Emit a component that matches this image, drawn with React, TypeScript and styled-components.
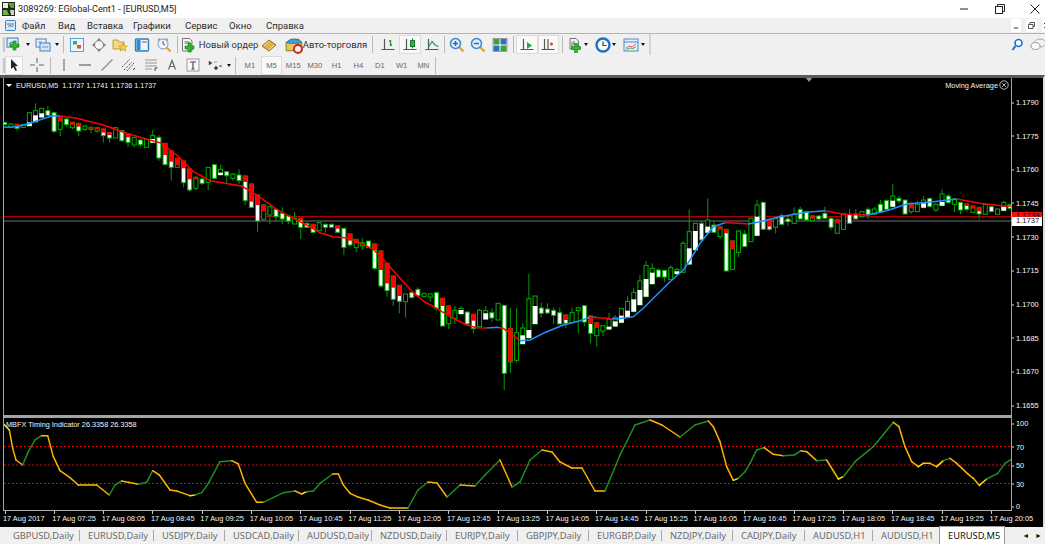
import React from "react";
import styled, { createGlobalStyle } from "styled-components";

const GlobalStyle = createGlobalStyle`
  html, body {
    margin: 0;
    padding: 0;
    background: #f0f0f0;
    overflow: hidden;
  }
`;

const UI_FONT = `Roboto, "Liberation Sans", sans-serif`;
const TAB_FONT = `"Noto Sans", "Liberation Sans", sans-serif`;
const CHART_FONT = `"Liberation Sans", Arial, sans-serif`;

const Window = styled.div`
  width: 1045px;
  height: 544px;
  display: flex;
  flex-direction: column;
  overflow: hidden;
  font-family: ${UI_FONT};
`;

const TitleBar = styled.div`
  height: 18px;
  background: #fff;
  display: flex;
  align-items: center;
  padding-left: 2px;
  color: #222;
  font-size: 9.15px;
`;

const TitleText = styled.span`
  margin-left: 3px;
  flex: 1;
`;

const WinButtons = styled.div`
  display: flex;
  margin-right: -8px;
`;

const WinButton = styled.div`
  width: 35.5px;
  height: 18px;
  display: flex;
  align-items: center;
  justify-content: center;
`;

const MenuBar = styled.div`
  height: 15px;
  background: #f0f0f0;
  border-bottom: 1px solid #b4b4b4;
  display: flex;
  align-items: center;
  font-size: 9.5px;
  color: #2a2a2a;
  padding-left: 5px;
`;

const MenuItem = styled.span<{ $w: number }>`
  width: ${(p) => p.$w}px;
  flex: none;
`;

const MdiButton = styled.div<{ $w: number }>`
  width: ${(p) => p.$w}px;
  height: 13px;
  flex: none;
  margin-left: 5px;
  background: #fff;
  display: flex;
  align-items: center;
  justify-content: center;
`;

const ToolRow = styled.div<{ $h: number }>`
  height: ${(p) => p.$h}px;
  background: #f0f0f0;
  display: flex;
  align-items: center;
  padding-left: 2px;
  font-size: 9.5px;
  color: #333;
`;

const Grip = styled.div`
  width: 3px;
  height: 15px;
  background: #c8c8c8;
  border-left: 1px solid #e8e8e8;
  box-sizing: border-box;
`;

const ToolGroup = styled.div<{ $end: number }>`
  display: flex;
  align-items: center;
  height: 100%;
  width: ${(p) => p.$end}px;
  box-sizing: border-box;
  border-right: 2px solid #d4d4d4;
`;

const Tool = styled.div<{ $w: number; $ml?: number; $active?: boolean; $gap?: number }>`
  width: ${(p) => p.$w}px;
  height: 19px;
  margin-left: ${(p) => p.$ml ?? 0}px;
  flex: none;
  display: flex;
  align-items: center;
  justify-content: center;
  box-sizing: border-box;
  background: ${(p) => (p.$active ? "#f9f9f9" : "transparent")};
  box-shadow: ${(p) => (p.$active ? "inset 0 0 0 1px #dcdcdc" : "none")};
`;

const TextTool = styled(Tool)`
  justify-content: flex-start;
  gap: ${(p) => p.$gap ?? 0}px;
  white-space: nowrap;
`;

const Period = styled(Tool)`
  font-family: ${CHART_FONT};
  font-size: 7.6px;
  color: #666;
`;

const Sep = styled.div<{ $w: number }>`
  width: ${(p) => p.$w}px;
  height: 17px;
  flex: none;
  display: flex;
  justify-content: center;

  &::before {
    content: "";
    width: 1px;
    background: #b9b9b9;
  }
`;

const Arrow = styled.div<{ $w: number }>`
  width: ${(p) => p.$w}px;
  flex: none;
  display: flex;
  justify-content: center;

  &::before {
    content: "";
    border-left: 2.5px solid transparent;
    border-right: 2.5px solid transparent;
    border-top: 3px solid #111;
  }
`;

const RightIcons = styled.div`
  margin-left: auto;
  display: flex;
  align-items: center;
  gap: 5px;
  margin-right: -1px;
`;

const ChartFrame = styled.div`
  height: 452px;
  flex: none;
  box-sizing: border-box;
  background: #000;
  border-top: 3px solid #5a5a5a;
  border-right: 2px solid #e0e0e0;
  display: flex;
  flex-direction: column;
`;

const Pane = styled.div<{ $h: number }>`
  height: ${(p) => p.$h}px;
  flex: none;
  display: flex;
  padding-left: 3px;
`;

const Plot = styled.div`
  position: relative;
  width: 1009px;
  box-sizing: border-box;
  border-left: 1px solid #a0a0a0;
  border-right: 1px solid #a0a0a0;
  flex: none;

  svg {
    display: block;
  }
`;

const Legend = styled.div`
  position: absolute;
  top: 3px;
  left: 2px;
  display: flex;
  align-items: center;
  gap: 3px;
  color: #f2f2f2;
  font: 7.2px ${CHART_FONT};
  white-space: pre;
`;

const LegendMark = styled.i`
  border-left: 3px solid transparent;
  border-right: 3px solid transparent;
  border-top: 3.5px solid #fff;
  margin-right: 1px;
`;

const IndicatorName = styled.div`
  position: absolute;
  top: 2px;
  right: 2px;
  display: flex;
  align-items: center;
  gap: 1px;
  color: #f2f2f2;
  font: 7.4px ${CHART_FONT};
`;

const ShiftMark = styled.i`
  position: absolute;
  top: 0;
  left: 802px;
  border-left: 3.5px solid transparent;
  border-right: 3.5px solid transparent;
  border-top: 4px solid #8a9aa8;
`;

const SubTitle = styled.div`
  position: absolute;
  top: 2px;
  left: 2px;
  color: #f4f4f4;
  font: 7.3px ${CHART_FONT};
`;

const Axis = styled.div`
  position: relative;
  flex: 1;
`;

const AxisLabel = styled.span`
  position: absolute;
  left: 4px;
  transform: translateY(-50%);
  color: #f6f6f6;
  font: 7.4px ${CHART_FONT};

  &::before {
    content: "";
    position: absolute;
    left: -4px;
    top: 50%;
    width: 2px;
    height: 1px;
    background: #ddd;
  }
`;

const PriceTag = styled.span<{ $bg: string; $h: number }>`
  position: absolute;
  left: 0;
  width: 30px;
  height: ${(p) => p.$h}px;
  box-sizing: border-box;
  padding-left: 4px;
  background: ${(p) => p.$bg};
  color: #111;
  font: 7.6px/8.5px ${CHART_FONT};
`;

const Divider = styled.div`
  height: 3px;
  flex: none;
  margin-left: 3px;
  width: 1009px;
  background: #a4a4a4;
`;

const BottomRule = styled.div`
  height: 1px;
  flex: none;
  margin-left: 3px;
  width: 1009px;
  background: #b0b0b0;
`;

const TimeAxis = styled.div`
  height: 16px;
  flex: none;
  display: flex;
  padding-left: 3px;
`;

const TimeLabel = styled.span`
  position: relative;
  width: 49.33px;
  flex: none;
  padding-top: 3px;
  color: #f6f6f6;
  font: 7.4px ${CHART_FONT};
  white-space: nowrap;

  &::before {
    content: "";
    position: absolute;
    top: 0;
    left: 1.5px;
    width: 1px;
    height: 3px;
    background: #ccc;
  }
`;

const TabBar = styled.div`
  flex: 1;
  display: flex;
  align-items: center;
  background: #f0f0f0;
  padding-left: 5px;
  font-family: ${TAB_FONT};
  font-size: 9.3px;
  color: #6a6a6a;
`;

const Tab = styled.div<{ $w: number; $active?: boolean }>`
  width: ${(p) => p.$w}px;
  height: ${(p) => (p.$active ? 17 : 11)}px;
  flex: none;
  box-sizing: border-box;
  display: flex;
  align-items: center;
  padding-left: 8px;
  white-space: nowrap;
  color: ${(p) => (p.$active ? "#111" : "inherit")};
  background: ${(p) => (p.$active ? "#fff" : "transparent")};
  border-right: ${(p) => (p.$active ? "none" : "1px solid #a8a8a8")};
  box-shadow: ${(p) => (p.$active ? "0 0 0 1px #9a9a9a" : "none")};
`;

const TabScroll = styled.div`
  margin-left: auto;
  display: flex;
  gap: 6px;
  padding-right: 3px;
  font-size: 7px;
  color: #111;
`;

/* candles: [high, bodyTop, bodyBottom, low, kind, split], in 1/3 px from a base y */
type Kind = "w" | "k" | "r" | "R" | "K";
type Row = [number, number, number, number, Kind, number?];

const rowsA: Row[] = [
  [97, 97, 104, 104, "w"], [100, 102, 112, 114, "k"], [103, 103, 115, 122, "r", 108], [102, 103, 112, 114, "k"],
  [68, 68, 108, 108, "K", 97], [40, 62, 96, 96, "K", 76], [55, 55, 82, 82, "K", 70], [47, 62, 76, 76, "w"],
  [68, 68, 124, 130, "w"], [82, 82, 118, 138, "R", 95], [84, 87, 104, 110, "w"], [95, 97, 113, 118, "R", 104],
  [100, 100, 123, 138, "r", 110], [106, 108, 118, 123, "k"], [112, 112, 118, 130, "R", 116], [110, 113, 123, 130, "R", 117],
  [117, 117, 137, 158, "r", 128], [128, 128, 144, 158, "r", 135], [112, 113, 144, 144, "k"], [120, 122, 152, 156, "w"],
  [130, 132, 157, 172, "r", 142], [142, 142, 165, 172, "k"], [148, 150, 164, 172, "w"], [148, 148, 172, 172, "k"],
  [120, 136, 158, 158, "K", 147], [136, 142, 204, 212, "w"], [160, 160, 224, 224, "r", 195], [183, 183, 232, 272, "r", 215],
  [205, 205, 232, 232, "R", 226], [213, 213, 278, 292, "r", 235], [237, 237, 300, 305, "r", 268], [258, 262, 295, 300, "R", 268],
  [262, 267, 280, 285, "w"], [232, 232, 277, 300, "k"], [224, 224, 265, 268, "w"], [224, 238, 255, 255, "K", 248],
  [245, 245, 257, 282, "w"], [250, 252, 265, 272, "k"], [238, 255, 272, 282, "w"], [258, 258, 332, 345, "r", 276],
  [282, 282, 352, 352, "r", 335], [315, 315, 393, 425, "r", 345], [345, 345, 388, 393, "R", 363], [350, 350, 375, 402, "k"],
  [355, 358, 380, 395, "w"], [352, 370, 387, 402, "w"], [375, 378, 393, 402, "w"], [365, 385, 402, 402, "k"],
  [383, 385, 412, 447, "r", 392], [398, 400, 412, 415, "w"], [403, 403, 427, 427, "r", 415], [395, 398, 422, 422, "k"],
  [400, 403, 412, 428, "w"], [400, 403, 412, 412, "w"], [406, 408, 427, 427, "r", 416], [415, 415, 472, 495, "w"],
];

const rowsB: Row[] = [
  [102, 102, 135, 140, "r", 122], [118, 118, 143, 157, "R", 130], [115, 128, 138, 150, "k"], [123, 123, 143, 143, "w"],
  [132, 132, 205, 212, "r", 150], [153, 153, 258, 265, "r", 210], [190, 190, 272, 290, "r", 250], [228, 228, 298, 318, "r", 263],
  [256, 256, 304, 340, "r", 288], [282, 282, 305, 353, "k"], [277, 277, 293, 293, "w"], [262, 268, 287, 287, "w"],
  [278, 280, 290, 292, "k"], [280, 282, 291, 305, "k"], [278, 278, 325, 332, "w"], [295, 295, 378, 378, "r", 318],
  [318, 318, 371, 387, "R", 345], [318, 331, 355, 372, "k"], [318, 325, 342, 342, "K", 330], [333, 336, 372, 372, "w"],
  [343, 343, 386, 400, "r", 362], [326, 331, 380, 380, "k"], [318, 332, 358, 358, "K", 340], [325, 338, 354, 366, "w"],
  [310, 310, 360, 360, "k"], [316, 316, 520, 570, "w"], [323, 385, 486, 520, "r", 486], [323, 398, 481, 488, "k"],
  [370, 384, 432, 432, "K", 406], [222, 296, 414, 414, "K", 390], [288, 288, 372, 372, "K", 318], [308, 324, 340, 353, "w"],
  [310, 327, 339, 342, "w"], [323, 331, 346, 373, "w"], [323, 338, 372, 372, "w"], [345, 345, 370, 385, "r", 360],
  [322, 338, 368, 368, "k"], [323, 323, 332, 400, "k"], [317, 317, 366, 378, "w"], [348, 348, 400, 430, "r", 372],
  [368, 368, 407, 440, "R", 384], [377, 377, 393, 408, "k"], [338, 358, 388, 388, "K", 380], [345, 352, 379, 379, "K", 364],
  [325, 325, 368, 368, "K", 347], [288, 304, 352, 352, "K", 332], [265, 277, 335, 335, "K", 298], [225, 243, 315, 315, "K", 270],
  [183, 196, 290, 290, "K", 237], [190, 205, 252, 252, "K", 218], [205, 210, 231, 231, "w"], [211, 211, 231, 245, "w"],
  [195, 203, 238, 238, "k"], [205, 208, 222, 222, "K", 214], [123, 130, 217, 217, "k"],
];

const rowsC: Row[] = [
  [118, 185, 283, 283, "K", 235], [160, 160, 240, 240, "K", 183], [152, 160, 210, 210, "w"], [85, 150, 188, 188, "K", 170],
  [150, 165, 187, 187, "w"], [168, 170, 200, 207, "R", 178], [178, 178, 303, 303, "r", 190], [213, 213, 298, 298, "R", 238],
  [180, 183, 247, 262, "k"], [180, 192, 230, 230, "w"], [145, 145, 215, 215, "k"], [90, 105, 197, 197, "K", 140],
  [97, 97, 178, 178, "w"], [148, 148, 178, 183, "r", 170], [140, 145, 172, 190, "k"], [130, 137, 163, 163, "w"],
  [135, 147, 155, 168, "w"], [112, 132, 160, 160, "k"], [110, 118, 147, 147, "w"], [122, 125, 150, 150, "w"],
  [135, 138, 152, 152, "R", 146], [135, 138, 147, 150, "w"], [110, 130, 145, 145, "w"], [140, 145, 172, 180, "w"],
  [148, 148, 190, 190, "R", 160], [130, 132, 178, 178, "k"], [118, 133, 160, 160, "w"], [118, 132, 147, 147, "w"],
  [122, 125, 140, 140, "k"], [112, 118, 135, 147, "w"], [110, 117, 133, 133, "k"], [90, 103, 127, 127, "w"],
  [88, 92, 118, 118, "w"], [43, 78, 110, 110, "K", 92], [78, 85, 93, 100, "w"], [90, 90, 132, 132, "w"],
  [97, 100, 125, 132, "R", 115], [92, 103, 125, 125, "k"], [78, 90, 113, 113, "K", 100], [85, 85, 110, 110, "w"],
  [98, 103, 120, 125, "k"], [58, 72, 107, 107, "K", 96], [72, 78, 98, 98, "w"], [85, 87, 103, 127, "k"],
  [97, 97, 120, 132, "w"], [102, 102, 118, 125, "r", 108], [108, 108, 127, 127, "R", 116], [112, 112, 132, 147, "r", 124],
  [103, 103, 133, 133, "k"], [110, 110, 125, 125, "w"], [115, 117, 133, 133, "k"], [92, 97, 122, 122, "K", 110],
  [104, 104, 115, 115, "w"],
];

const BAR_STEP = 6.167;
const barX = (i: number) => 4.7 + i * BAR_STEP;
const toY = (z: number, base: number) => base + z / 3;

const scaleRows = (rows: Row[], base: number) =>
  rows.map((r) => ({
    hi: toY(r[0], base),
    top: toY(r[1], base),
    bot: toY(r[2], base),
    lo: toY(r[3], base),
    kind: r[4],
    split: r[5] === undefined ? 0 : toY(r[5], base),
  }));

const candles = [...scaleRows(rowsA, 90), ...scaleRows(rowsB, 200), ...scaleRows(rowsC, 170)];

const WICK = "#009000";
const EDGE = "#00b000";

const Candle = ({ i }: { i: number }) => {
  const c = candles[i];
  const x = barX(i);
  const h = Math.max(c.bot - c.top, 1);
  const rect = { x: x - 2, width: 4 };
  return (
    <g>
      <line x1={x} x2={x} y1={c.hi} y2={c.lo} stroke={WICK} strokeWidth={1.1} />
      {c.kind === "w" && <rect {...rect} y={c.top} height={h} fill="#fff" stroke={EDGE} strokeWidth={1} />}
      {c.kind === "k" && <rect {...rect} y={c.top} height={h} fill="#000" stroke={EDGE} strokeWidth={1} />}
      {c.kind === "K" && (
        <>
          <rect {...rect} y={c.top} height={h} fill="#000" stroke={EDGE} strokeWidth={1} />
          <rect x={x - 2.4} width={4.8} y={c.split} height={c.bot - c.split} fill="#fff" />
        </>
      )}
      {c.kind === "r" && (
        <>
          <rect {...rect} y={c.top} height={h} fill="#fff" stroke={EDGE} strokeWidth={1} />
          <rect x={x - 2.2} width={4.4} y={c.top - 0.4} height={c.split - c.top + 0.4} fill="#f00" />
        </>
      )}
      {c.kind === "R" && (
        <>
          <rect {...rect} y={c.top} height={h} fill="#000" stroke={EDGE} strokeWidth={1} />
          <rect x={x - 2.2} width={4.4} y={c.top - 0.4} height={c.split - c.top + 0.4} fill="#f00" />
        </>
      )}
    </g>
  );
};

/* moving average as coloured runs */
const z6 = (a: number[][]) => a.map(([x, y]) => [x / 3, 90 + y / 3]);
const z7 = (a: number[][]) => a.map(([x, y]) => [350 + x / 3, 200 + y / 3]);
const z8 = (a: number[][]) => a.map(([x, y]) => [680 + x / 3, 170 + y / 3]);

const BLUE = "#1e90ff";
const RED = "#f00";

const maRuns: { color: string; pts: number[][] }[] = [
  { color: BLUE, pts: z6([[11, 112], [50, 110], [90, 100], [125, 88], [155, 78], [180, 78]]) },
  {
    color: RED,
    pts: [
      ...z6([[180, 78], [230, 85], [310, 105], [380, 130], [440, 148], [480, 158], [530, 195], [580, 245], [630, 272], [725, 288], [770, 315], [830, 358], [880, 385], [920, 405], [960, 428], [1000, 440], [1050, 445]]),
      ...z7([[70, 148], [110, 190], [150, 235], [190, 278], [220, 303], [260, 325], [300, 350], [350, 375], [380, 383], [410, 384]]),
    ],
  },
  { color: BLUE, pts: z7([[410, 384], [440, 382], [450, 383]]) },
  { color: RED, pts: z7([[450, 383], [460, 385], [480, 400], [510, 422]]) },
  { color: BLUE, pts: z7([[510, 422], [540, 420], [580, 400], [640, 375], [690, 362], [720, 352], [740, 352]]) },
  { color: RED, pts: z7([[720, 352], [770, 355], [785, 356]]) },
  { color: BLUE, pts: [...z7([[785, 356], [800, 357], [850, 350], [880, 325], [920, 285], [960, 245], [1000, 210]]), ...z8([[30, 270], [60, 220], [100, 170], [135, 158]])] },
  { color: RED, pts: z8([[135, 158], [175, 160], [205, 162]]) },
  { color: BLUE, pts: z8([[205, 162], [240, 155], [300, 140], [380, 127], [435, 122]]) },
  { color: RED, pts: z8([[435, 122], [490, 133], [560, 135]]) },
  { color: BLUE, pts: z8([[560, 135], [620, 122], [680, 102], [760, 95], [830, 87]]) },
  { color: RED, pts: z8([[830, 87], [900, 100], [970, 108], [1000, 108]]) },
];

const line = (pts: number[][]) => pts.map((p) => p.map((v) => v.toFixed(1)).join(",")).join(" ");

/* oscillator, real px */
const z4 = (a: number[][]) => a.map(([x, y]) => [x / 3, 405 + y / 3]);
const z5 = (a: number[][]) => a.map(([x, y]) => [695 + x / 3, 405 + y / 3]);

const oscPts: number[][] = [
  ...z4([[12, 58], [28, 75], [38, 130], [48, 165], [68, 180], [85, 140], [105, 105], [125, 92], [143, 92], [160, 155], [180, 197], [210, 218], [235, 240], [290, 240], [328, 270], [345, 240], [365, 228], [385, 232], [415, 238], [440, 232], [458, 197], [478, 210], [510, 255], [530, 258], [570, 272], [585, 270], [605, 263], [625, 235], [660, 170], [695, 167], [715, 177], [735, 235], [770, 292], [790, 292], [850, 263], [885, 258], [905, 267], [920, 260], [940, 258], [960, 235], [998, 207], [1015, 207], [1030, 240], [1050, 265]]),
  [358, 497], [368, 500], [380, 505], [390, 508], [408, 508], [418, 490], [428, 482], [437, 483], [447, 497], [460, 485], [475, 486], [485, 475], [500, 460], [512, 487], [520, 482], [530, 460], [542, 450], [552, 452], [560, 462], [572, 468], [582, 468], [595, 491], [605, 491], [620, 455], [635, 425], [650, 420], [662, 425], [680, 437],
  ...z5([[0, 60], [40, 48], [55, 65], [75, 110], [95, 185], [115, 226], [130, 220], [150, 200], [165, 175], [185, 135], [207, 128], [235, 148], [265, 152], [298, 150], [318, 137], [335, 140], [365, 167], [395, 165], [430, 222], [445, 215], [480, 170], [535, 125], [595, 52], [612, 65], [630, 125], [650, 170], [670, 185], [685, 175], [705, 175], [725, 185], [745, 167], [765, 160], [785, 175], [820, 208], [835, 220], [853, 241], [875, 222], [908, 205], [930, 175], [948, 163]]),
];

const oscColor = (i: number) => {
  const dy = oscPts[i + 1][1] - oscPts[i][1];
  const dx = oscPts[i + 1][0] - oscPts[i][0];
  const prev = i > 0 ? oscPts[i][1] - oscPts[i - 1][1] : dy;
  if (i === 0) return "#ffe600";
  if (dy < 0 && prev > 0 && dx < 8 && Math.abs(dy) < 9) return "#ffe600";
  if (Math.abs(dy) <= 0.6) return "#ffc000";
  return dy < 0 ? "#1f8f1f" : "#ffb000";
};

const priceLabels = [
  ["1.1790", 102], ["1.1775", 135.5], ["1.1760", 169], ["1.1745", 202.5], ["1.1730", 236.5],
  ["1.1715", 270], ["1.1700", 304], ["1.1685", 337.5], ["1.1670", 371], ["1.1655", 405],
] as const;

const oscLabels = [["100", 423], ["70", 446.5], ["50", 465], ["30", 483.5], ["0", 506]] as const;

const times = ["17 Aug 2017", "17 Aug 07:25", "17 Aug 08:05", "17 Aug 08:45", "17 Aug 09:25", "17 Aug 10:05", "17 Aug 10:45", "17 Aug 11:25", "17 Aug 12:05", "17 Aug 12:45", "17 Aug 13:25", "17 Aug 14:05", "17 Aug 14:45", "17 Aug 15:25", "17 Aug 16:05", "17 Aug 16:45", "17 Aug 17:25", "17 Aug 18:05", "17 Aug 18:45", "17 Aug 19:25", "17 Aug 20:05"];

const tabs: [string, number][] = [
  ["GBPUSD,Daily", 75], ["EURUSD,Daily", 74], ["USDJPY,Daily", 71], ["USDCAD,Daily", 74], ["AUDUSD,Daily", 73],
  ["NZDUSD,Daily", 75], ["EURJPY,Daily", 71], ["GBPJPY,Daily", 71], ["EURGBP,Daily", 73], ["NZDJPY,Daily", 71],
  ["CADJPY,Daily", 72], ["AUDUSD,H1", 68], ["AUDUSD,H1", 67],
];

/* toolbar drawings */
const Ico = ({ s = 16, children }: { s?: number; children: React.ReactNode }) => (
  <svg width={s} height={s} viewBox="0 0 16 16" fill="none" style={{ flex: "none" }}>
    {children}
  </svg>
);

const Plus = ({ x, y }: { x: number; y: number }) => (
  <path d={`M${x} ${y}h3v3h3v3h-3v3h-3v-3h-3v-3h3z`} fill="#2fb52f" stroke="#0f7a0f" strokeWidth={0.6} />
);

const NewChartIcon = () => (
  <Ico>
    <rect x="1" y="1" width="11" height="9" fill="#dfeefa" stroke="#3b78b8" />
    <path d="M3 7l2-2 2 1 2-2" stroke="#3b78b8" />
    <Plus x={7} y={4} />
  </Ico>
);

const ProfilesIcon = () => (
  <Ico>
    <rect x="1" y="2" width="10" height="8" fill="#e6f1fb" stroke="#4a80b8" />
    <rect x="5" y="6" width="10" height="8" fill="#d5e6f6" stroke="#4a80b8" />
    <path d="M3 5h4M7 10h6" stroke="#6f93b5" />
  </Ico>
);

const MarketIcon = () => (
  <Ico>
    <rect x="1.5" y="1.5" width="13" height="13" fill="#eef6fd" stroke="#59a0d8" />
    <rect x="4" y="4" width="4" height="3.5" fill="#3fae49" />
    <rect x="8" y="8" width="4" height="3.5" fill="#e2562b" />
  </Ico>
);

const NavigatorIcon = () => (
  <Ico>
    <circle cx="8" cy="8" r="4.5" stroke="#777" fill="#f6f6f6" />
    <path d="M8 1l2 2.5H6zM8 15l2-2.5H6zM1 8l2.5-2v4zM15 8l-2.5-2v4z" fill="#777" />
  </Ico>
);

const FolderStarIcon = () => (
  <Ico>
    <path d="M1 3h5l1 2h5v7H1z" fill="#f4d789" stroke="#b99b47" />
    <path d="M11 6l1.3 2.8 3 .3-2.2 2 .7 3-2.8-1.6-2.8 1.6.7-3-2.2-2 3-.3z" fill="#f7d23c" stroke="#b08c14" strokeWidth={0.6} />
  </Ico>
);

const TerminalIcon = () => (
  <Ico>
    <rect x="1.5" y="2" width="13" height="12" rx="1" fill="#eaf4fc" stroke="#2d7fc0" strokeWidth={1.4} />
    <rect x="2.5" y="3" width="4" height="10" fill="#2d8ad0" />
    <path d="M8 5h5" stroke="#c43" />
  </Ico>
);

const TesterIcon = () => (
  <Ico>
    <circle cx="7" cy="7" r="5" fill="#eef4fa" stroke="#7f9cb8" />
    <path d="M7 4v3l2 1" stroke="#557" />
    <path d="M4 1.5L2 3.5M10 1.5l2 2" stroke="#7f9cb8" strokeWidth={1.4} />
    <path d="M10.5 10.5l4 4" stroke="#d6a83a" strokeWidth={2} />
  </Ico>
);

const OrderIcon = () => (
  <Ico>
    <path d="M2.5 1.5h7l2.5 2.5v10h-9.5z" fill="#f5f5f5" stroke="#777" />
    <rect x="4.5" y="4" width="5" height="3" fill="#aaa" />
    <Plus x={8} y={6} />
  </Ico>
);

const BookIcon = () => (
  <Ico>
    <path d="M1 9l7-6 7 5-7 6z" fill="#e0b34a" stroke="#96701c" />
    <path d="M3 9l5-4.5M8 13l5-5" stroke="#f6e2a4" />
  </Ico>
);

const AutoIcon = () => (
  <Ico s={18}>
    <path d="M1 6l5-3h6l3 3v7H1z" fill="#e9c655" stroke="#9c8431" />
    <path d="M1 6c3-4 10-5 14 0-4 1-10 1-14 0z" fill="#3e9ad8" stroke="#2a6f9f" strokeWidth={0.6} />
    <circle cx="11.5" cy="11.5" r="3.5" fill="#fff" stroke="#d4241c" strokeWidth={1.8} />
  </Ico>
);

const Axes = () => <path d="M4.5 2v11M1.5 12.5h13" stroke="#555" strokeWidth={1.2} />;

const BarsIcon = () => (
  <Ico>
    <Axes />
    <path d="M10.5 3v6M9 4h1.5M10.5 8h1.5" stroke="#1e9a3a" strokeWidth={1.3} />
  </Ico>
);

const CandleIcon = () => (
  <Ico>
    <Axes />
    <path d="M10.5 1.5v10" stroke="#127a2e" />
    <rect x="8.5" y="3.5" width="4" height="6" fill="#2bb34c" stroke="#127a2e" />
  </Ico>
);

const LineIcon = () => (
  <Ico>
    <Axes />
    <path d="M4.5 10L8 4.5l3 3.5 3.5 1.5" stroke="#2c9a46" strokeWidth={1.2} />
  </Ico>
);

const ZoomIcon = ({ minus }: { minus?: boolean }) => (
  <Ico>
    <path d="M9.5 9.5l5 5" stroke="#d8a93a" strokeWidth={2.4} />
    <circle cx="6.5" cy="6.5" r="5" fill="#dcefff" stroke="#3c86c8" strokeWidth={1.5} />
    <path d={minus ? "M4 6.5h5" : "M4 6.5h5M6.5 4v5"} stroke="#2a6cb0" strokeWidth={1.5} />
  </Ico>
);

const TileIcon = () => (
  <Ico>
    <rect x="1" y="1.5" width="14" height="13" fill="#fff" stroke="#444" strokeWidth={0.5} />
    <rect x="1.5" y="2" width="6" height="5.5" fill="#3aa03a" />
    <rect x="8.5" y="2" width="6" height="5.5" fill="#2a6fc8" />
    <rect x="1.5" y="8.5" width="6" height="5.5" fill="#2a6fc8" />
    <rect x="8.5" y="8.5" width="6" height="5.5" fill="#3aa03a" />
  </Ico>
);

const ScrollIcon = () => (
  <Ico>
    <Axes />
    <path d="M8 5l5 3.5-5 3.5z" fill="#2aa24a" />
  </Ico>
);

const ShiftIcon = () => (
  <Ico>
    <Axes />
    <path d="M8 2v10" stroke="#555" strokeWidth={1.2} />
    <path d="M10 7h3M11.5 5.5v3" stroke="#d2452c" strokeWidth={1.5} />
  </Ico>
);

const IndicatorIcon = () => (
  <Ico>
    <path d="M3 1.5h6l2.5 2.5v8h-8.5z" fill="#f2f2f2" stroke="#777" />
    <path d="M5 5v5M7 4v4" stroke="#667" />
    <Plus x={7.5} y={6.5} />
  </Ico>
);

const ClockIcon = () => (
  <Ico>
    <circle cx="8" cy="8" r="6.5" fill="#fff" stroke="#1d72c2" strokeWidth={2.4} />
    <path d="M8 4.5v4h3.5" stroke="#245" strokeWidth={1.2} />
  </Ico>
);

const TemplateIcon = () => (
  <Ico>
    <rect x="1" y="2" width="14" height="12" fill="#e3f0fb" stroke="#4c88c0" />
    <path d="M1 5h14" stroke="#4c88c0" />
    <path d="M3 11l3-2 3 1 4-3" stroke="#d9684e" />
    <path d="M3 12.5l4-1.5 3 .5 3-2" stroke="#55a84f" />
  </Ico>
);

const CursorIcon = () => (
  <Ico>
    <path d="M5 2l7 7-3 .3 2 4-1.6.7-1.9-4-2.5 2z" fill="#222" />
  </Ico>
);

const CrossIcon = () => (
  <Ico>
    <path d="M8 1v5M8 10v5M1 8h5M10 8h5" stroke="#666" strokeWidth={1.1} />
  </Ico>
);

const VLine = () => (
  <Ico>
    <path d="M8 2v12" stroke="#777" strokeWidth={1.2} />
  </Ico>
);

const HLine = () => (
  <Ico>
    <path d="M2 8h12" stroke="#777" strokeWidth={1.4} />
  </Ico>
);

const TrendLine = () => (
  <Ico>
    <path d="M2.5 13.5l11-11" stroke="#888" strokeWidth={1.1} />
  </Ico>
);

const ChannelIcon = () => (
  <Ico>
    <path d="M1 10l8-8M3 13l8-8M6 14l7-8" stroke="#555" strokeWidth={1} strokeDasharray="1.5 0.8" />
    <path d="M12 13l2-2" stroke="#333" />
  </Ico>
);

const FiboIcon = () => (
  <Ico>
    <path d="M2 3h12M2 6h12M2 9h12M2 12h7" stroke="#999" />
    <path d="M12 11h2.5M12 11v3" stroke="#444" />
  </Ico>
);

const LetterIcon = () => (
  <Ico>
    <path d="M4.5 12.5L8 3.5l3.5 9M5.8 9.5h4.4" stroke="#666" strokeWidth={1.2} />
  </Ico>
);

const LabelIcon = () => (
  <Ico>
    <rect x="2" y="2" width="12" height="12" fill="#f7f7f7" stroke="#999" />
    <path d="M5 5h6M8 5v7M6.5 12h3" stroke="#444" strokeWidth={1.1} />
  </Ico>
);

const ArrowsIcon = () => (
  <Ico>
    <path d="M2 4l3 2-3 2zM7 5h3M7 11l2 2 2-2-2-2z" fill="#444" stroke="#444" strokeWidth={0.5} />
    <path d="M12 9h3" stroke="#444" />
  </Ico>
);

const SearchIcon = () => (
  <Ico>
    <circle cx="9.5" cy="6" r="3.5" fill="#fff" stroke="#1c6fd0" strokeWidth={1.6} />
    <path d="M6.5 9l-3 4" stroke="#1c6fd0" strokeWidth={2} />
  </Ico>
);

const ChatIcon = () => (
  <Ico>
    <ellipse cx="10" cy="6" rx="5.5" ry="4" fill="#f4f4f4" stroke="#aaa" />
    <ellipse cx="5.5" cy="9" rx="4.5" ry="3.5" fill="#fafafa" stroke="#999" />
  </Ico>
);

const MtLogo = () => (
  <svg width="13" height="14" viewBox="0 0 13 14">
    <rect width="13" height="14" fill="#1f2a1a" />
    <rect x="1" y="1" width="5" height="5" fill="#e8e8e8" />
    <path d="M6 1h6v5H9z" fill="#5aa02c" />
    <path d="M1 8h4l2 5H1z" fill="#6db33f" />
    <path d="M8 8h4v5H9z" fill="#d0d0d0" />
  </svg>
);

const DocIcon = () => (
  <svg width="11" height="11" viewBox="0 0 11 11" fill="none" style={{ display: "block" }}>
    <rect x="0.5" y="0.5" width="10" height="10" rx="1" fill="#d8e8f7" stroke="#3f7fc0" />
    <path d="M2 4h7M3 6.5l2-1 2 1 1.5-1" stroke="#3f7fc0" />
  </svg>
);

const MinGlyph = () => (
  <svg width="10" height="10" viewBox="0 0 10 10">
    <path d="M1 5h8" stroke="#222" strokeWidth={1} />
  </svg>
);

const RestoreGlyph = () => (
  <svg width="10" height="10" viewBox="0 0 10 10" fill="none">
    <path d="M2.5 2.5V.5h7v7h-2" stroke="#222" />
    <rect x="0.5" y="2.5" width="7" height="7" stroke="#222" />
  </svg>
);

const CloseGlyph = () => (
  <svg width="10" height="10" viewBox="0 0 10 10">
    <path d="M.5.5l9 9M9.5.5l-9 9" stroke="#222" strokeWidth={1} />
  </svg>
);

const CircleX = () => (
  <svg width="10" height="10" viewBox="0 0 10 10" fill="none">
    <circle cx="5" cy="5" r="4.2" stroke="#e4e4e4" strokeWidth={0.8} />
    <path d="M3.2 3.2l3.6 3.6M6.8 3.2L3.2 6.8" stroke="#e4e4e4" strokeWidth={0.8} />
  </svg>
);

const periods = ["M1", "M5", "M15", "M30", "H1", "H4", "D1", "W1", "MN"];

const App = () => {
  return (
    <Window>
      <GlobalStyle />
      <TitleBar>
        <MtLogo />
        <TitleText>3089269: EGlobal-Cent1 - [EURUSD,M5]</TitleText>
        <WinButtons>
          <WinButton><MinGlyph /></WinButton>
          <WinButton><RestoreGlyph /></WinButton>
          <WinButton><CloseGlyph /></WinButton>
        </WinButtons>
      </TitleBar>

      <MenuBar>
        <MenuItem $w={17}><DocIcon /></MenuItem>
        <MenuItem $w={36}>Файл</MenuItem>
        <MenuItem $w={29}>Вид</MenuItem>
        <MenuItem $w={46}>Вставка</MenuItem>
        <MenuItem $w={52}>Графики</MenuItem>
        <MenuItem $w={44}>Сервис</MenuItem>
        <MenuItem $w={37}>Окно</MenuItem>
        <MenuItem $w={740}>Справка</MenuItem>
        <MdiButton $w={10}><svg width="6" height="6"><path d="M1 5h4" stroke="#333" /></svg></MdiButton>
        <MdiButton $w={11}><svg width="7" height="7" fill="none"><path d="M2 2V.5h4.5v4H5M.5 2.5H5v4H.5z" stroke="#555" /></svg></MdiButton>
        <MdiButton $w={9}><svg width="5" height="5"><path d="M0 0l5 5M5 0L0 5" stroke="#333" /></svg></MdiButton>
      </MenuBar>

      <ToolRow $h={21}>
        <Grip />
        <ToolGroup $end={646}>
          <Tool $w={18}><NewChartIcon /></Tool>
          <Arrow $w={9} />
          <Tool $w={22}><ProfilesIcon /></Tool>
          <Arrow $w={6} />
          <Sep $w={6} />
          <Tool $w={21.75}><MarketIcon /></Tool>
          <Tool $w={21.75}><NavigatorIcon /></Tool>
          <Tool $w={21.75}><FolderStarIcon /></Tool>
          <Tool $w={21.75}><TerminalIcon /></Tool>
          <Tool $w={21.75}><TesterIcon /></Tool>
          <Sep $w={5} />
          <TextTool $w={78} $gap={3}><OrderIcon />Новый ордер</TextTool>
          <Tool $w={22}><BookIcon /></Tool>
          <TextTool $w={84} $ml={5}><AutoIcon />Авто-торговля</TextTool>
          <Sep $w={8} />
          <Tool $w={22}><BarsIcon /></Tool>
          <Tool $w={22} $active><CandleIcon /></Tool>
          <Tool $w={22}><LineIcon /></Tool>
          <Sep $w={3} />
          <Tool $w={22}><ZoomIcon /></Tool>
          <Tool $w={21}><ZoomIcon minus /></Tool>
          <Tool $w={22}><TileIcon /></Tool>
          <Sep $w={5} />
          <Tool $w={22} $active><ScrollIcon /></Tool>
          <Tool $w={21} $active><ShiftIcon /></Tool>
          <Sep $w={7} />
          <Tool $w={18}><IndicatorIcon /></Tool>
          <Arrow $w={5} />
          <Tool $w={18} $ml={5}><ClockIcon /></Tool>
          <Arrow $w={5} />
          <Tool $w={18} $ml={5}><TemplateIcon /></Tool>
          <Arrow $w={6} />
        </ToolGroup>
        <RightIcons>
          <SearchIcon />
          <ChatIcon />
        </RightIcons>
      </ToolRow>

      <ToolRow $h={20}>
        <Grip />
        <Tool $w={18} $active><CursorIcon /></Tool>
        <Tool $w={25} $ml={1}><CrossIcon /></Tool>
        <Sep $w={3} />
        <Tool $w={21} $ml={1}><VLine /></Tool>
        <Tool $w={22}><HLine /></Tool>
        <Tool $w={22}><TrendLine /></Tool>
        <Tool $w={22}><ChannelIcon /></Tool>
        <Tool $w={21}><FiboIcon /></Tool>
        <Tool $w={21}><LetterIcon /></Tool>
        <Tool $w={22}><LabelIcon /></Tool>
        <Tool $w={22}><ArrowsIcon /></Tool>
        <Arrow $w={5} />
        <Sep $w={8} />
        {periods.map((name) => (
          <Period key={name} $w={21.7} $active={name === "M5"}>{name}</Period>
        ))}
        <Sep $w={3} />
      </ToolRow>

      <ChartFrame>
        <Pane $h={337}>
          <Plot>
            <svg width="1007" height="337" viewBox="4 78 1007 337">
              <line x1="4" x2="1012" y1="216.7" y2="216.7" stroke="#d40000" strokeWidth={1} />
              <line x1="4" x2="1012" y1="221" y2="221" stroke="#70707a" strokeWidth={1.2} />
              {candles.map((_, i) => (
                <Candle key={i} i={i} />
              ))}
              {maRuns.map((run, i) => (
                <polyline key={i} points={line(run.pts)} fill="none" stroke={run.color} strokeWidth={1.5} strokeLinejoin="round" />
              ))}
            </svg>
            <Legend>
              <LegendMark />
              {"EURUSD,M5  1.1737 1.1741 1.1736 1.1737"}
            </Legend>
            <ShiftMark />
            <IndicatorName>
              Moving Average
              <CircleX />
            </IndicatorName>
          </Plot>
          <Axis>
            {priceLabels.map(([text, y]) => (
              <AxisLabel key={text} style={{ top: y - 78 }}>{text}</AxisLabel>
            ))}
            <PriceTag $bg="#f01010" $h={5} style={{ top: 134 }}>1.1739</PriceTag>
            <PriceTag $bg="#fff" $h={8.5} style={{ top: 139 }}>1.1737</PriceTag>
          </Axis>
        </Pane>
        <Divider />
        <Pane $h={92}>
          <Plot>
            <svg width="1007" height="92" viewBox="4 418 1007 92">
              {[446.5, 465, 483.5].map((y) => (
                <line key={y} x1="4" x2="1012" y1={y} y2={y} stroke="#f00000" strokeWidth={1.1} strokeDasharray="2 2" />
              ))}
              {oscPts.slice(0, -1).map((p, i) => (
                <line key={i} x1={p[0]} y1={p[1]} x2={oscPts[i + 1][0]} y2={oscPts[i + 1][1]} stroke={oscColor(i)} strokeWidth={1.5} strokeLinecap="round" />
              ))}
            </svg>
            <SubTitle>MBFX Timing Indicator 26.3358 26.3358</SubTitle>
          </Plot>
          <Axis>
            {oscLabels.map(([text, y]) => (
              <AxisLabel key={text} style={{ top: y - 418 }}>{text}</AxisLabel>
            ))}
          </Axis>
        </Pane>
        <BottomRule />
        <TimeAxis>
          {times.map((t) => (
            <TimeLabel key={t}>{t}</TimeLabel>
          ))}
        </TimeAxis>
      </ChartFrame>

      <TabBar>
        {tabs.map(([name, w], i) => (
          <Tab key={i} $w={w}>{name}</Tab>
        ))}
        <Tab $w={64} $active>EURUSD,M5</Tab>
        <TabScroll>
          <span>◄</span>
          <span>►</span>
        </TabScroll>
      </TabBar>
    </Window>
  );
};

export default App;
